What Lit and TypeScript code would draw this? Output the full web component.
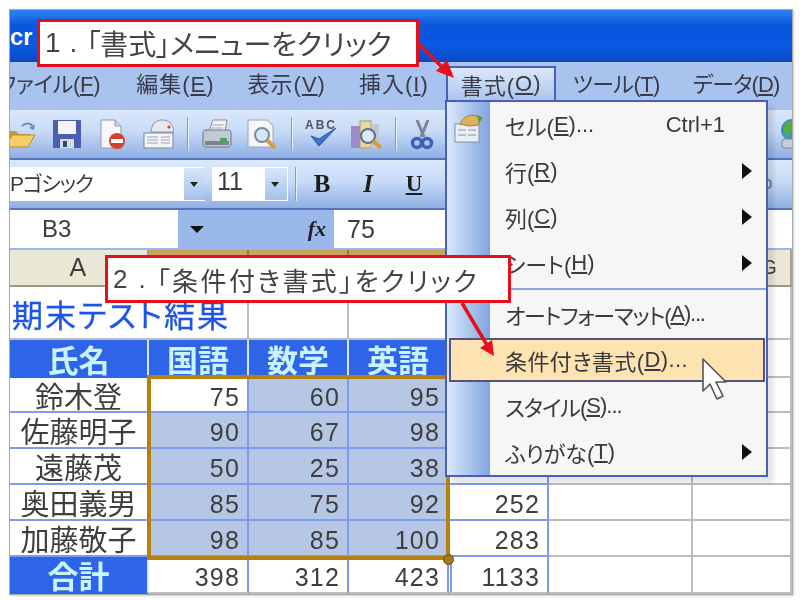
import { LitElement, html, css, svg } from "lit";
import { customElement } from "lit/decorators.js";

const ICONS: Record<string, unknown> = {
  folder: svg`<path d="M1 13h11l3 3h11L22 29H1z" fill="#c79a3a"/><path d="M2 29l6-12h23l-7 12z" fill="#f6cf6a" stroke="#b98a2a"/><path d="M18 8c4-4 9-3 11 1" fill="none" stroke="#6d8fc0" stroke-width="2"/><path d="M31 6l-1 6-5-2z" fill="#6d8fc0"/>`,
  save: svg`<rect x="3" y="2" width="28" height="28" fill="#4a5fb0"/><rect x="8" y="3" width="18" height="13" fill="#f2f4fa"/><rect x="10" y="21" width="14" height="9" fill="#d7dbe6"/><rect x="13" y="23" width="4" height="6" fill="#39456e"/>`,
  perm: svg`<path d="M5 2h14l6 6v22H5z" fill="#f7f8fb" stroke="#8d97b5"/><path d="M19 2v6h6" fill="#cfd6e8" stroke="#8d97b5"/><circle cx="21" cy="23" r="8" fill="#d6402a"/><rect x="15" y="21" width="12" height="4" fill="#fff"/>`,
  mail: svg`<path d="M9 14C10 5 14 2 20 2s11 3 12 12z" fill="#e7e9ef" stroke="#8b93a8"/><circle cx="27" cy="9" r="1.6" fill="#d6402a"/><rect x="2" y="15" width="29" height="15" fill="#f3f4f7" stroke="#7f8798"/><path d="M5 19h11M5 22h11M5 25h11M19 19h9M19 22h9M19 25h9" stroke="#9aa3b6"/>`,
  print: svg`<path d="M9 13l4-11h14l-2 11z" fill="#f4f4f4" stroke="#8a8f9c"/><path d="M12 7h12M11 10h12" stroke="#a0a6b4"/><path d="M3 15c0-2 1-3 3-3h22c2 0 3 1 3 3v11c0 2-1 3-3 3H6c-2 0-3-1-3-3z" fill="#c3c8d2" stroke="#6d7484"/><rect x="5" y="23" width="24" height="4" fill="#7c8494"/><rect x="20" y="20" width="7" height="4" fill="#35b04a"/>`,
  preview: svg`<path d="M2 2h19l6 6v21H2z" fill="#f5f6f9" stroke="#9aa2b5"/><circle cx="16" cy="17" r="7" fill="#d6e6f6" stroke="#7c8aa5" stroke-width="2"/><path d="M21 22l8 8" stroke="#dd9a3c" stroke-width="4"/>`,
  abc: svg`<text x="1" y="11" font-size="12" font-weight="700" font-family="Liberation Sans" fill="#555" textLength="30">ABC</text><path d="M7 18l8 10L32 10l-17 11z" fill="#3f72c8" stroke="#2c559c" stroke-linejoin="round"/>`,
  research: svg`<rect x="1" y="8" width="9" height="22" fill="#9b8cc8"/><rect x="10" y="3" width="11" height="27" fill="#e6d79a" stroke="#a89a68"/><rect x="21" y="6" width="8" height="24" fill="#c2c7d4"/><circle cx="18" cy="18" r="7" fill="#dceaf8" stroke="#5e6e90" stroke-width="2"/><path d="M23 23l8 7" stroke="#dd9a3c" stroke-width="4"/>`,
  cut: svg`<path d="M11 2l7 17M22 2l-7 17" stroke="#7d8594" stroke-width="3"/><circle cx="11" cy="25" r="4.5" fill="none" stroke="#3c62b8" stroke-width="3.4"/><circle cx="21" cy="25" r="4.5" fill="none" stroke="#3c62b8" stroke-width="3.4"/>`,
  globe: svg`<circle cx="15" cy="12" r="11" fill="#3f8fd0"/><path d="M8 4c5-2 10 0 10 4s-5 3-5 8-5 2-6-2 1-7 1-10z" fill="#55ad45"/><rect x="5" y="21" width="22" height="9" rx="3" fill="#c9ced8" stroke="#7f8798"/>`,
};

const icon = (n: string) => html`<svg class="ic" viewBox="0 0 32 32">${ICONS[n]}</svg>`;
const key = (label: string, k: string, tail = "") => html`${label}(<u>${k}</u>)${tail}`;

const ROWS: [string, number, number, number, number][] = [
  ["鈴木登", 75, 60, 95, 230],
  ["佐藤明子", 90, 67, 98, 255],
  ["遠藤茂", 50, 25, 38, 113],
  ["奥田義男", 85, 75, 92, 252],
  ["加藤敬子", 98, 85, 100, 283],
];

@customElement("app-root")
export class AppRoot extends LitElement {
  static styles = css`
    :host { display: block; width: 800px; height: 600px; position: relative; background: #fff; overflow: hidden;
      font-family: "Liberation Sans", "Noto Sans CJK JP", sans-serif; font-feature-settings: "palt"; color: #3c3c3c; filter: blur(0.55px); }
    .wrap { padding: 9px 7px 5px 9px; box-sizing: border-box; height: 600px; }
    .frame { border: 1px solid #a9a9a9; height: 586px; box-sizing: border-box; display: flex; flex-direction: column; overflow: hidden; box-shadow: 1px 1px 2px #ccc; }
    .title { height: 52px; flex: none; background: linear-gradient(#2f83f4, #0a56dc 30%, #0a58e2 70%, #0b48c4); color: #fff; font-weight: 700; font-size: 24px; display: flex; align-items: center; padding-top: 2px; box-sizing: border-box; }
    .menubar { height: 48px; flex: none; background: #a9c3ef; display: flex; align-items: center; font-size: 22px; color: #3a3a48; white-space: nowrap; box-sizing: border-box; padding-bottom: 8px; overflow: hidden; }
    .menubar span { display: block; letter-spacing: 1px; }
    .m0 { margin-left: -12px; margin-right: 36px; letter-spacing: -.3px !important; }
    .m1 { margin-right: 33px; }
    .m2 { margin-right: 33px; }
    .m3 { margin-right: 17px; }
    .tab { width: 110px; align-self: flex-start; height: 44px; margin: 4px 17px 0 0; box-sizing: border-box; padding: 0 0 10px 13px; display: flex !important; align-items: center;
      background: linear-gradient(#dce8fa, #9db9e8); border: 2px solid #4a5fb8; border-bottom: none; }
    .m5 { margin-right: 33px; letter-spacing: -.6px !important; }
    .m6 { letter-spacing: -.9px !important; }
    .tb1 { height: 50px; flex: none; box-sizing: border-box; display: flex; align-items: center; gap: 14px; overflow: hidden;
      background: linear-gradient(#dbe8fb, #c7daf7 45%, #8fafe3); border-bottom: 2px solid #5573bb; }
    .ic { width: 32px; height: 32px; flex: none; display: block; }
    .tb1 > svg:first-of-type { margin-left: -6px; }
    .cut { margin-left: -2px; }
    .sep { width: 2px; height: 34px; background: #e8f0fc; border-left: 1px solid #7f9cd0; box-sizing: border-box; flex: none; margin: 0 -3px 0 -1px; }
    .globe { margin-left: auto; margin-right: -17px; }
    .tb2 { height: 50px; flex: none; box-sizing: border-box; display: flex; align-items: center; overflow: hidden;
      background: linear-gradient(#dbe8fb, #c7daf7 45%, #8fafe3); border-bottom: 2px solid #5573bb; font-size: 22px; }
    .box { height: 34px; background: #fff; display: flex; align-items: center; flex: none; box-sizing: border-box; white-space: nowrap; }
    .box span { display: block; margin-top: -5px; }
    .font { width: 195px; font-size: 21px; letter-spacing: -1.2px; }
    .size { width: 76px; margin-left: 7px; padding-left: 5px; font-size: 25px; }
    .box b { margin-left: auto; width: 21px; height: 32px; background: linear-gradient(#d8e6fa, #a5c0ec); position: relative; flex: none; }
    .size b { margin-right: 1px; width: 22px; }
    .box b::after { content: ""; position: absolute; left: 6px; top: 14px; border: 4px solid transparent; border-top: 5px solid #222; border-bottom: none; }
    .tb2 .sep { margin: 0 0 0 7px; }
    .fmt { font: 700 25px "Liberation Serif", serif; color: #1c1c1c; flex: none; width: 46px; text-align: center; }
    .fmt.i { font-style: italic; }
    .fmt.u { text-decoration: underline; font-size: 23px; }
    .b0 { margin-left: 2px; }
    .frag { margin-left: auto; margin-right: 19px; width: 6px; height: 12px; flex: none; }
    .formula { height: 40px; flex: none; display: flex; background: #9ab8ea; font-size: 25px; align-items: stretch; box-sizing: border-box; padding-bottom: 2px; }
    .name { width: 168px; background: #fff; padding-left: 32px; box-sizing: border-box; display: flex; align-items: center; flex: none; font-size: 24px; }
    .drop { flex: none; width: 156px; display: flex; align-items: center; justify-content: space-between; padding: 0 8px 0 12px; box-sizing: border-box; }
    .tri { border: 7px solid transparent; border-top: 7px solid #111; border-bottom: none; width: 0; height: 0; }
    .fx { font: italic 700 22px "Liberation Serif", serif; color: #222; }
    .val { flex: 1; background: #fff; padding-left: 13px; display: flex; align-items: center; }
    .sheet { flex: 1; display: grid; grid-template-columns: 139px 100px 100px 100px 100px 144px 1fr; grid-template-rows: 37px 53px 38px 35px 36px 36px 36px 36px 37px; }
    .c { box-sizing: border-box; border-right: 2px solid #bdbdbd; border-bottom: 2px solid #bdbdbd; display: flex; align-items: center; justify-content: flex-end; padding-right: 7px; font-size: 25px; letter-spacing: 1.2px; color: #3e3e3e; overflow: hidden; white-space: nowrap; }
    .hd { background: #ece8d8; justify-content: center; padding: 0; border-color: #a8a390; border-bottom-color: #9f9a86; font-size: 25px; }
    .hd.sel { background: linear-gradient(#c9a05e, #e0b878); border-color: #8e7a50; }
    .hd.g { justify-content: flex-end; padding-right: 12px; font-size: 20px; }
    .ttl { grid-column: span 2; justify-content: flex-start; padding: 2px 0 0 2px; font-size: 31px; letter-spacing: 2px; color: #1e55e6; -webkit-text-stroke: 0.3px #1e55e6; }
    .th { background: #2d64e8; color: #c9f3ff; font-weight: 700; font-size: 31px; justify-content: center; padding: 0; letter-spacing: 0; border-color: #dbe6fb; border-bottom-color: #2d64e8; }
    .th.e { border-right-color: #6f8ff0; }
    .th.last { border-bottom-color: #2d64e8; }
    .nm { justify-content: center; padding: 0; font-size: 29px; letter-spacing: 0; border-bottom-color: #7d9bf0; border-right-color: #7d9bf0; }
    .n { border-color: #7d9bf0; padding-top: 5px; }
    .s { background: #b5c7e4; }
    .tot { border-bottom-color: #bdbdbd; padding-top: 6px; }
    .dbl { position: relative; }
    .dbl::before { content: ""; position: absolute; left: 1px; top: 0; bottom: 0; width: 2px; background: #7d9bf0; }
    .selbox { position: absolute; left: 147px; top: 375px; width: 303px; height: 185px; box-sizing: border-box; border: 4px solid #b5820f; }
    .handle { position: absolute; left: 443px; top: 554px; width: 11px; height: 11px; border-radius: 50%; background: #a67a14; border: 1px solid #5f4a18; box-sizing: border-box; }
    .menu { position: absolute; left: 445px; top: 100px; width: 323px; height: 377px; box-sizing: border-box; border: 2px solid #4a5fb8;
      background: linear-gradient(to right, #dae9fc, #7fa4df) no-repeat 0 0 / 43px 100%, #f6f6f6; box-shadow: 6px 6px 4px rgba(0,0,0,.1); font-size: 22px; color: #3a3a3a; }
    .it { height: 46px; display: flex; align-items: center; padding: 0 14px 0 58px; box-sizing: border-box; white-space: nowrap; position: relative; }
    .it .kb { margin-left: auto; margin-right: 27px; }
    .arr { margin-left: auto; width: 0; height: 0; border-left: 10px solid #111; border-top: 8px solid transparent; border-bottom: 8px solid transparent; }
    .hr { height: 2px; margin: 2px 0 1px 43px; background: #8fa3da; }
    .hl { height: 44px; margin: 1px 1px 1px 2px; padding-left: 54px; background: #fde2b2; border: 2px solid #56537f; letter-spacing: .4px; }
    .tight { letter-spacing: -1.2px; }
    .tight2 { letter-spacing: -1px; }
    .mi { position: absolute; left: 6px; top: 10px; width: 32px; height: 32px; }
    .call { position: absolute; background: #fff; border: 3px solid #e80f1c; box-sizing: border-box; display: flex; align-items: center; white-space: nowrap; color: #444; }
    .call span { display: block; }
    .c1 { left: 37px; top: 19px; width: 382px; height: 48px; padding-left: 5px; font-size: 28px; letter-spacing: -.1px; }
    .c1 span { letter-spacing: 9px; }
    .c2 { left: 105px; top: 255px; width: 406px; height: 48px; padding-left: 5px; font-size: 26px; letter-spacing: 2.4px; }
    .c2 span { letter-spacing: 11px; }
    .over { position: absolute; left: 0; top: 0; width: 800px; height: 600px; pointer-events: none; }
  `;

  render() {
    const cols = ["B", "C", "D"];
    return html`
      <div class="wrap"><div class="frame">
        <div class="title">cr</div>
        <div class="menubar">
          <span class="m0">ファイル(<u>F</u>)</span>
          <span class="m1">${key("編集", "E")}</span>
          <span class="m2">${key("表示", "V")}</span>
          <span class="m3">${key("挿入", "I")}</span>
          <span class="tab">${key("書式", "O")}</span>
          <span class="m5">${key("ツール", "T")}</span>
          <span class="m6">${key("データ", "D")}</span>
        </div>
        <div class="tb1">
          ${["folder", "save", "perm", "mail"].map(icon)}
          <i class="sep"></i>
          ${["print", "preview"].map(icon)}
          <i class="sep"></i>
          ${["abc", "research"].map(icon)}
          <i class="sep"></i>
          <span class="cut">${icon("cut")}</span>
          <span class="globe">${icon("globe")}</span>
        </div>
        <div class="tb2">
          <div class="box font"><span>Pゴシック</span><b></b></div>
          <div class="box size"><span>11</span><b></b></div>
          <i class="sep"></i>
          <span class="fmt b0">B</span><span class="fmt i">I</span><span class="fmt u">U</span>
          <svg class="frag" viewBox="0 0 6 12"><path d="M1 2c4 0 4 8 0 8" fill="none" stroke="#66708a" stroke-width="1.6"/></svg>
        </div>
        <div class="formula">
          <div class="name">B3</div>
          <div class="drop"><i class="tri"></i><span class="fx">fx</span></div>
          <div class="val">75</div>
        </div>
        <div class="sheet">
          <div class="c hd">A</div>
          ${cols.map((c) => html`<div class="c hd sel">${c}</div>`)}
          <div class="c hd">E</div><div class="c hd">F</div><div class="c hd g">G</div>

          <div class="c ttl">期末テスト結果</div>
          <div class="c"></div><div class="c"></div><div class="c"></div><div class="c"></div><div class="c"></div>

          <div class="c th">氏名</div><div class="c th">国語</div><div class="c th">数学</div><div class="c th e">英語</div><div class="c th e">合計</div>
          <div class="c"></div><div class="c"></div>

          ${ROWS.map((r, i) => html`
            <div class="c nm">${r[0]}</div>
            <div class="c n ${i === 0 ? "" : "s"}">${r[1]}</div>
            <div class="c n s">${r[2]}</div>
            <div class="c n s">${r[3]}</div>
            <div class="c n">${r[4]}</div>
            <div class="c"></div><div class="c"></div>`)}

          <div class="c th last">合計</div>
          <div class="c n tot">398</div><div class="c n tot">312</div><div class="c n tot">423</div>
          <div class="c n tot dbl">1133</div>
          <div class="c tot"></div><div class="c tot"></div>
        </div>
      </div></div>

      <div class="selbox"></div>
      <div class="handle"></div>

      <div class="menu">
        <div class="it">
          <svg class="mi" viewBox="0 0 32 32"><rect x="2" y="12" width="24" height="18" fill="#e8edf6" stroke="#8490a8"/><path d="M5 18h8M15 18h8M5 23h8M15 23h8" stroke="#8490a8"/><path d="M7 12c3-7 9-9 13-9l8 2-3 8-9 1z" fill="#dcb35a" stroke="#a57e2e"/><path d="M24 3l6 3-4 5z" fill="#4f9e48"/></svg>
          ${key("セル", "E", "...")}<span class="kb">Ctrl+1</span>
        </div>
        <div class="it">${key("行", "R")}<i class="arr"></i></div>
        <div class="it">${key("列", "C")}<i class="arr"></i></div>
        <div class="it">${key("シート", "H")}<i class="arr"></i></div>
        <div class="hr"></div>
        <div class="it tight">${key("オートフォーマット", "A", "...")}</div>
        <div class="it hl">${key("条件付き書式", "D", "...")}</div>
        <div class="it tight2">${key("スタイル", "S", "...")}</div>
        <div class="it">${key("ふりがな", "T")}<i class="arr"></i></div>
      </div>

      <div class="call c1"><span>1.</span>「書式」メニューをクリック</div>
      <div class="call c2"><span>2.</span>「条件付き書式」をクリック</div>

      <svg class="over" viewBox="0 0 800 600">
        <path d="M419 44L445 70" stroke="#e80f1c" stroke-width="3.5"/>
        <path d="M454 78L436 71 447 60z" fill="#e80f1c"/>
        <path d="M462 303L487 345" stroke="#e80f1c" stroke-width="3.5"/>
        <path d="M494 356L480 348 492 340z" fill="#e80f1c"/>
        <path d="M703 359V391L710 384 717 399 723 396 716 382H726z" fill="#fff" stroke="#555" stroke-width="1.6" stroke-linejoin="round"/>
      </svg>
    `;
  }
}
